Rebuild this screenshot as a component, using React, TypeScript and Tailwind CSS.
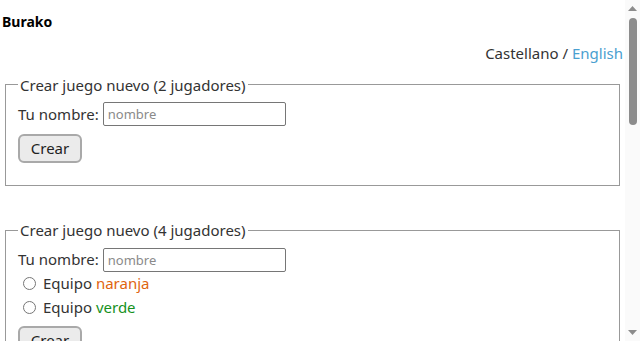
import React from "react";

function NameRow() {
  return (
    <div className="flex items-center gap-1">
      <label className="whitespace-nowrap">Tu nombre:</label>
      <input
        type="text"
        placeholder="nombre"
        className="h-6 w-[183px] rounded-[2px] border border-[#767676] bg-white px-1 text-[13px] placeholder:text-[#8a8a8a] outline-none"
      />
    </div>
  );
}

function CreateButton() {
  return (
    <button className="h-[29px] w-16 rounded-md border-2 border-[#a9a9a9] bg-[#ebebeb] text-[15px] text-[#222]">
      Crear
    </button>
  );
}

function Team({ label, color }: { label: string; color: string }) {
  return (
    <label className="flex h-6 items-center gap-[7px] pl-[5px]">
      <input type="radio" name="team" className="m-0 size-[13px]" />
      <span>
        Equipo <span className={color}>{label}</span>
      </span>
    </label>
  );
}

// page scrollbar as it shows in the screenshot
function ScrollBar() {
  return (
    <div className="flex w-[15px] shrink-0 flex-col items-center bg-[#fafafa] pb-[6px] pt-[6px]">
      <svg width="9" height="5" viewBox="0 0 9 5">
        <path d="M0 5 L4.5 0 L9 5 Z" fill="#8c8c8c" />
      </svg>
      <div className="mt-[7px] h-[107px] w-2 rounded-full bg-[#8c8c8c]" />
      <div className="flex-1" />
      <svg width="9" height="5" viewBox="0 0 9 5">
        <path d="M0 0 L4.5 5 L9 0 Z" fill="#8c8c8c" />
      </svg>
    </div>
  );
}

export default function App() {
  return (
    <div className="flex h-[341px] overflow-hidden bg-white font-['Noto_Sans',sans-serif] text-[15px] text-[#333]">
      <main className="min-w-0 flex-1 px-[2px] pt-[12px]">
        <h1 className="text-sm font-bold text-black">Burako</h1>

        <div className="mt-[10px] text-right">
          Castellano / <a className="text-[#4aa0d0]">English</a>
        </div>

        <fieldset className="mx-[3px] mt-[9px] border border-[#999] px-3 pb-[22px] pt-[6px]">
          <legend className="px-[2px]">Crear juego nuevo (2 jugadores)</legend>
          <NameRow />
          <div className="mt-2">
            <CreateButton />
          </div>
        </fieldset>

        <fieldset className="mx-[3px] mt-[33px] border border-[#999] px-3 pb-5 pt-[6px]">
          <legend className="px-[2px]">Crear juego nuevo (4 jugadores)</legend>
          <NameRow />
          <Team label="naranja" color="text-[#e0650f]" />
          <Team label="verde" color="text-[#16911d]" />
          <div className="mt-[6px]">
            <CreateButton />
          </div>
        </fieldset>
      </main>
      <ScrollBar />
    </div>
  );
}
